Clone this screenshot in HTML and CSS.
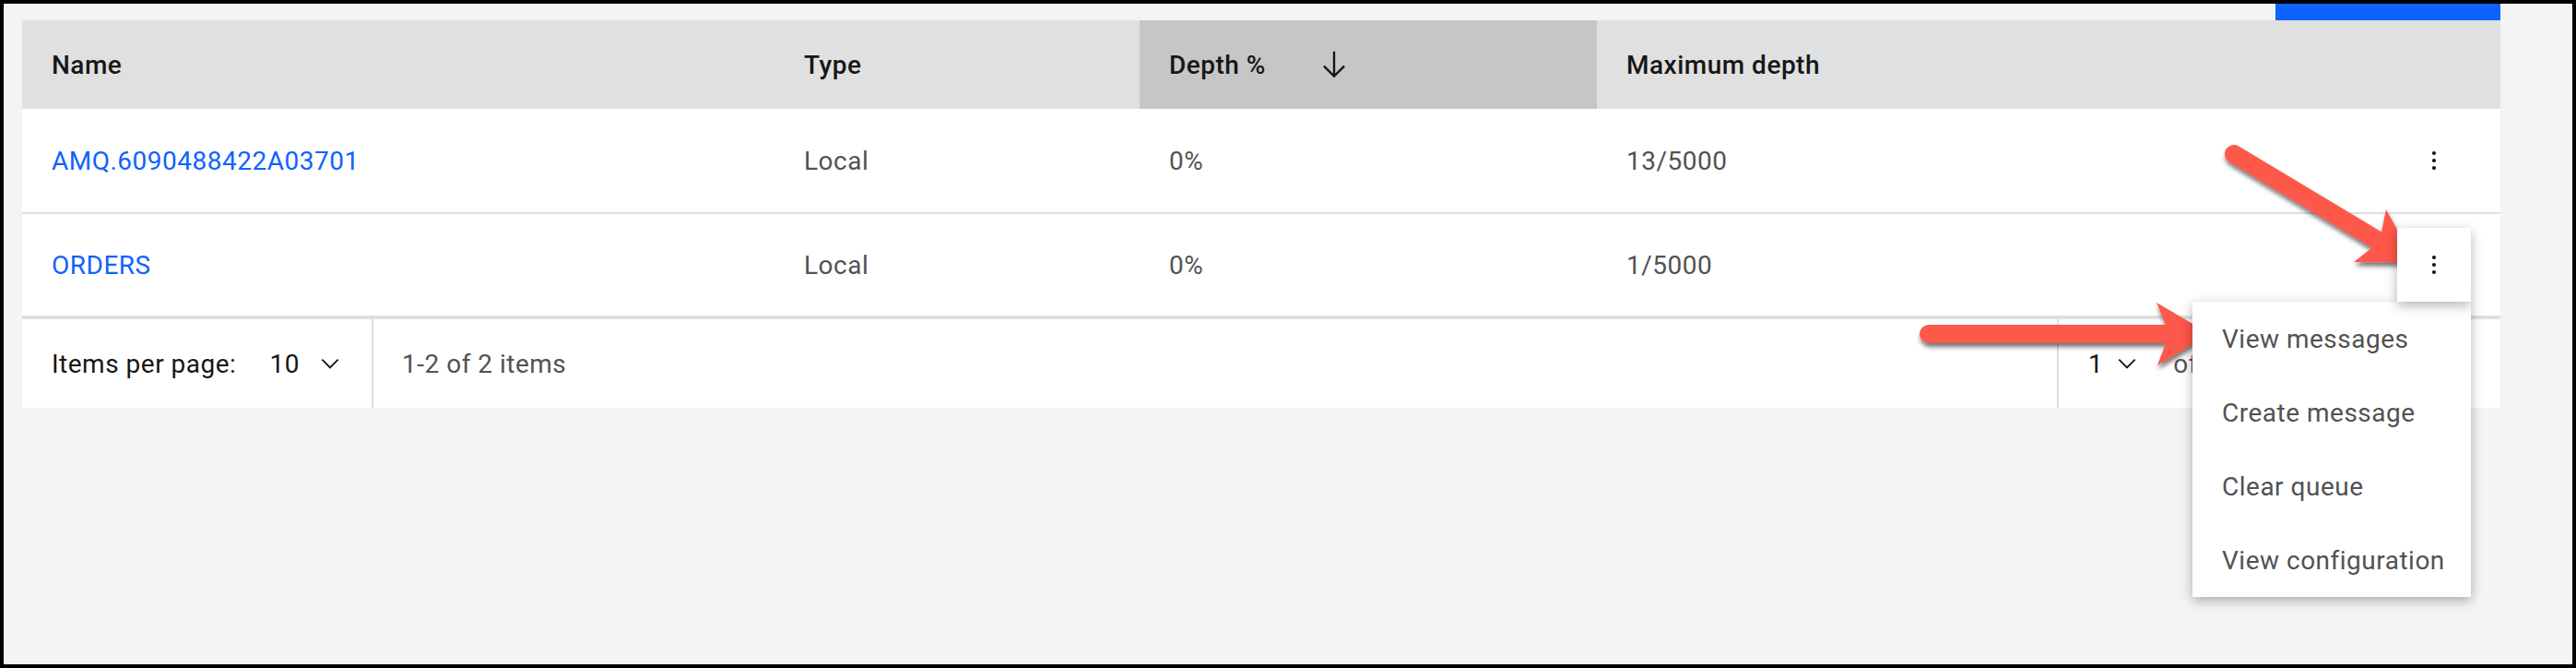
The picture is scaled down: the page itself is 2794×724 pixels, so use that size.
FILE: index.html
```html
<!DOCTYPE html>
<html lang="en">
<head>
<meta charset="utf-8">
<title>Queues</title>
<link rel="stylesheet" href="styles.css">
</head>
<body>
<div class="screen">
  <div class="toolbar"><div class="primary-btn"></div></div>
  <div class="table">
    <div class="row head">
      <div class="cell">Name</div>
      <div class="cell">Type</div>
      <div class="cell sorted">Depth %
        <svg class="sort-icon" viewBox="0 0 32 32" width="38" height="38"><path d="M24.59 16.59L17 24.17V4h-2v20.17l-7.59-7.58L6 18l10 10 10-10-1.41-1.41z"/></svg>
      </div>
      <div class="cell">Maximum depth</div>
      <div class="cell"></div>
    </div>
    <div class="row body r1">
      <div class="cell"><a class="link">AMQ.6090488422A03701</a></div>
      <div class="cell">Local</div>
      <div class="cell">0%</div>
      <div class="cell">13/5000</div>
      <div class="cell ovf">
        <div class="ovf-btn">
          <svg viewBox="0 0 24 24" width="24" height="24"><circle cx="12" cy="4" r="2.1"/><circle cx="12" cy="12" r="2.1"/><circle cx="12" cy="20" r="2.1"/></svg>
        </div>
      </div>
    </div>
    <div class="row body r2">
      <div class="cell"><a class="link">ORDERS</a></div>
      <div class="cell">Local</div>
      <div class="cell">0%</div>
      <div class="cell">1/5000</div>
      <div class="cell ovf">
        <div class="ovf-wrap">
          <div class="ovf-btn open">
            <svg viewBox="0 0 24 24" width="24" height="24"><circle cx="12" cy="4" r="2.1"/><circle cx="12" cy="12" r="2.1"/><circle cx="12" cy="20" r="2.1"/></svg>
          </div>
          <ul class="menu">
            <li>View messages</li>
            <li>Create message</li>
            <li>Clear queue</li>
            <li>View configuration</li>
          </ul>
        </div>
      </div>
    </div>
    <div class="pager">
      <div class="pg-left">
        <span class="pg-label">Items per page:</span>
        <span class="pg-select">10
          <svg viewBox="0 0 16 16" width="30" height="30"><path d="M8 11L3 6 3.7 5.3 8 9.6 12.3 5.3 13 6z"/></svg>
        </span>
      </div>
      <div class="pg-range">1-2 of 2 items</div>
      <div class="pg-right">
        <span class="pg-select">1
          <svg viewBox="0 0 16 16" width="30" height="30"><path d="M8 11L3 6 3.7 5.3 8 9.6 12.3 5.3 13 6z"/></svg>
        </span>
        <span class="pg-of">of</span>
        <span class="pg-spacer"></span>
        <span class="pg-nav"></span>
        <span class="pg-nav"></span>
      </div>
    </div>
  </div>
</div>
<svg class="annot" width="2794" height="724" viewBox="0 0 2794 724">
  <defs>
    <filter id="sh" x="-10%" y="-10%" width="120%" height="130%">
      <feDropShadow dx="1" dy="4" stdDeviation="2.5" flood-color="#000" flood-opacity="0.55"/>
    </filter>
  </defs>
  <g filter="url(#sh)" fill="#fd5849" stroke="none">
    <line x1="2423" y1="167" x2="2583" y2="263" stroke="#fd5849" stroke-width="20" stroke-linecap="round"/>
    <polygon points="2588,227 2620,285 2553,284 2581,262"/>
  </g>
  <g filter="url(#sh)" fill="#fd5849" stroke="none">
    <line x1="2092" y1="362" x2="2356" y2="362" stroke="#fd5849" stroke-width="20" stroke-linecap="round"/>
    <polygon points="2339,328 2397,362 2340,396 2353,362"/>
  </g>
</svg>
</body>
</html>
```
FILE: styles.css
```css
* { box-sizing: border-box; }
html, body { margin: 0; padding: 0; }
body {
  position: relative;
  width: 2794px;
  height: 724px;
  overflow: hidden;
  font-family: Roboto, "Liberation Sans", Arial, sans-serif;
  font-size: 28px;
  letter-spacing: 0.5px;
  color: #525252;
}
.screen {
  width: 2794px;
  height: 724px;
  border: 4px solid #000;
  background: #f4f4f4;
  padding: 0 78px 0 20px;
}
.toolbar {
  height: 18px;
  display: flex;
  justify-content: flex-end;
}
.primary-btn {
  width: 244px;
  height: 18px;
  background: #0f62fe;
}
.table {
  background: #fff;
}
.row {
  display: grid;
  grid-template-columns: 816px 396px 496px 1fr 112px;
}
.cell {
  display: flex;
  align-items: center;
  padding-left: 32px;
  white-space: nowrap;
}
.head {
  height: 96px;
  background: #e0e0e0;
}
.head .cell {
  color: #161616;
  font-weight: 500;
}
.head .sorted {
  background: #c6c6c6;
}
.sort-icon {
  margin-left: 55px;
  fill: #161616;
}
.body {
  border-bottom: 2px solid #e0e0e0;
}
.r1 { height: 114px; }
.r2 { height: 112px; }
.link {
  color: #0f62fe;
  text-decoration: none;
}
.ovf {
  padding-left: 0;
  position: relative;
}
.ovf-wrap {
  position: relative;
  width: 80px;
  height: 80px;
}
.ovf-btn {
  width: 80px;
  height: 80px;
  display: flex;
  align-items: center;
  justify-content: center;
  fill: #161616;
}
.ovf-btn.open {
  position: relative;
  z-index: 2;
  background: #fff;
  box-shadow: 0 4px 12px rgba(0, 0, 0, 0.3);
}
.menu {
  position: absolute;
  z-index: 1;
  top: 80px;
  right: 0;
  width: 302px;
  margin: 0;
  padding: 0;
  list-style: none;
  background: #fff;
  box-shadow: 0 4px 12px rgba(0, 0, 0, 0.3);
}
.menu li {
  height: 80px;
  display: flex;
  align-items: center;
  padding-left: 32px;
  color: #525252;
  white-space: nowrap;
}
.pager {
  height: 98px;
  border-top: 2px solid #e0e0e0;
  display: flex;
  align-items: stretch;
}
.pg-left {
  display: flex;
  align-items: center;
  padding-left: 32px;
  width: 381px;
  border-right: 2px solid #e0e0e0;
  color: #161616;
}
.pg-select {
  display: flex;
  align-items: center;
  margin-left: 36px;
  color: #161616;
  fill: #161616;
}
.pg-select svg {
  margin-left: 18px;
}
.pg-range {
  display: flex;
  align-items: center;
  padding-left: 31px;
  flex: 1;
}
.pg-right {
  display: flex;
  align-items: center;
  width: 481px;
  border-left: 2px solid #e0e0e0;
}
.pg-right .pg-select {
  margin-left: 32px;
}
.pg-right .pg-select svg {
  margin-left: 11px;
}
.pg-of {
  margin-left: 35px;
  white-space: nowrap;
}
.pg-spacer {
  flex: 1;
}
.pg-nav {
  width: 96px;
  flex: none;
  align-self: stretch;
  border-left: 2px solid #e0e0e0;
}
.annot {
  position: absolute;
  top: 0;
  left: 0;
  pointer-events: none;
}
```
